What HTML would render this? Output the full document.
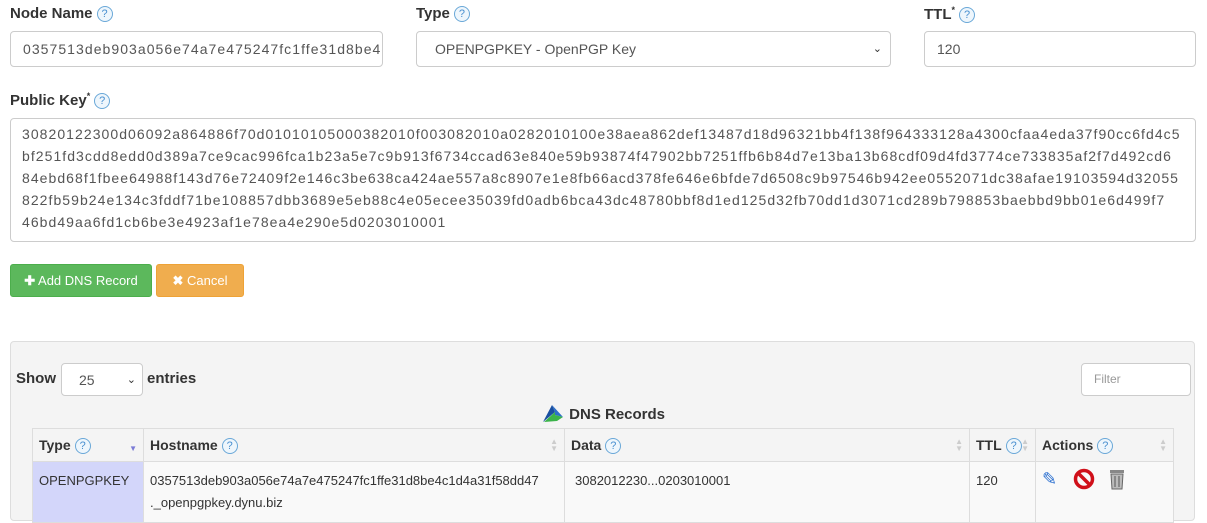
<!DOCTYPE html>
<html><head><meta charset="utf-8"><style>
body{margin:0;width:1207px;height:514px;overflow:hidden;background:#fff;font-family:"Liberation Sans",sans-serif;color:#333;position:relative}
.a{position:absolute}
.lbl{font-weight:bold;font-size:15px;color:#333}
.q{display:inline-block;width:14px;height:14px;border:1px solid #6aa8d8;border-radius:50%;color:#4a90d0;font-size:11px;line-height:14px;text-align:center;font-weight:normal;background:#eef6fc;vertical-align:1px;margin-left:4px}
.inp{border:1px solid #ccc;border-radius:4px;box-sizing:border-box;background:#fff;font-size:14px;color:#555;padding-left:12px;white-space:nowrap;overflow:hidden}
.ta div{white-space:nowrap;letter-spacing:1.05px;height:22px}
.btn{color:#fff;font-size:13px;border-radius:3px;box-sizing:border-box;text-align:center;line-height:32px}
th,td{border:1px solid #ddd;text-align:left;vertical-align:top}
th{font-size:14px;font-weight:bold;height:32px;padding:0 6px;vertical-align:middle;background:#f4f4f4;position:relative}
td{font-size:13px;padding:8px 6px 0;line-height:22px;background:#f9f9f9}
.s{position:absolute;right:6px;top:9px;color:#ccc;font-size:8px;line-height:7px}
</style></head><body>
<div class="a lbl" style="left:10px;top:5px">Node Name<span class="q">?</span></div>
<div class="a inp" style="left:10px;top:31px;width:373px;height:36px;line-height:34px;letter-spacing:1.05px">0357513deb903a056e74a7e475247fc1ffe31d8be4c1d4a31f58dd47</div>
<div class="a lbl" style="left:416px;top:5px">Type<span class="q">?</span></div>
<div class="a inp" style="left:416px;top:31px;width:475px;height:36px;line-height:34px;padding-left:18px">OPENPGPKEY - OpenPGP Key<span style="position:absolute;right:8px;top:0;font-size:11px;color:#333">&#8964;</span></div>
<div class="a lbl" style="left:924px;top:5px">TTL<sup style="font-size:9px">*</sup><span class="q">?</span></div>
<div class="a inp" style="left:924px;top:31px;width:272px;height:36px;line-height:34px">120</div>
<div class="a lbl" style="left:10px;top:91px">Public Key<sup style="font-size:9px">*</sup><span class="q">?</span></div>
<div class="a inp ta" style="left:10px;top:118px;width:1186px;height:124px;padding:4px 0 0 11px;line-height:22px">
<div>30820122300d06092a864886f70d01010105000382010f003082010a0282010100e38aea862def13487d18d96321bb4f138f964333128a4300cfaa4eda37f90cc6fd4c5</div>
<div>bf251fd3cdd8edd0d389a7ce9cac996fca1b23a5e7c9b913f6734ccad63e840e59b93874f47902bb7251ffb6b84d7e13ba13b68cdf09d4fd3774ce733835af2f7d492cd6</div>
<div>84ebd68f1fbee64988f143d76e72409f2e146c3be638ca424ae557a8c8907e1e8fb66acd378fe646e6bfde7d6508c9b97546b942ee0552071dc38afae19103594d32055</div>
<div>822fb59b24e134c3fddf71be108857dbb3689e5eb88c4e05ecee35039fd0adb6bca43dc48780bbf8d1ed125d32fb70dd1d3071cd289b798853baebbd9bb01e6d499f7</div>
<div>46bd49aa6fd1cb6be3e4923af1e78ea4e290e5d0203010001</div>
</div>
<div class="a btn" style="left:10px;top:264px;width:142px;height:33px;background:#5cb85c;border:1px solid #4cae4c"><b>&#10010;</b> Add DNS Record</div>
<div class="a btn" style="left:156px;top:264px;width:88px;height:33px;background:#f0ad4e;border:1px solid #eea236"><b>&#10006;</b> Cancel</div>
<div class="a" style="left:10px;top:341px;width:1185px;height:180px;background:#f4f4f4;border:1px solid #ddd;border-radius:4px;box-sizing:border-box"></div>
<div class="a lbl" style="left:16px;top:370px;font-size:15px">Show</div>
<div class="a inp" style="left:61px;top:363px;width:82px;height:33px;line-height:33px;padding-left:17px;font-size:14px">25<span style="position:absolute;right:6px;top:0;font-size:11px;color:#333">&#8964;</span></div>
<div class="a lbl" style="left:147px;top:370px;font-size:15px">entries</div>
<div class="a inp" style="left:1081px;top:363px;width:110px;height:33px;line-height:31px;font-size:12px;color:#999;padding-left:12px">Filter</div>
<div class="a lbl" style="left:541px;top:403px;font-size:15px"><svg width="24" height="20" viewBox="0 0 24 20" style="vertical-align:-4px"><path d="M2 19 L11 2 L14 9 Z" fill="#1a4fa0"/><path d="M11 2 L22 14 L14 12 L14 9Z" fill="#2d6fc8"/><path d="M3 19 L14 9 L14 12 L22 14 L16 18Z" fill="#3bb34a"/></svg> DNS Records</div>
<table class="a" style="left:32px;top:428px;border-collapse:collapse;width:1142px">
<tr><th style="width:98px">Type<span class="q">?</span><span class="s" style="color:#7b7bd6;top:16px">&#9660;</span></th><th style="width:408px">Hostname<span class="q">?</span><span class="s">&#9650;<br>&#9660;</span></th><th style="width:392px">Data<span class="q">?</span><span class="s">&#9650;<br>&#9660;</span></th><th style="width:53px">TTL<span class="q">?</span><span class="s">&#9650;<br>&#9660;</span></th><th>Actions<span class="q">?</span><span class="s">&#9650;<br>&#9660;</span></th></tr>
<tr><td style="background:#d3d6fa;height:52px">OPENPGPKEY</td><td>0357513deb903a056e74a7e475247fc1ffe31d8be4c1d4a31f58dd47<br>._openpgpkey.dynu.biz</td><td style="padding-left:10px">3082012230...0203010001</td><td>120</td><td style="padding-top:6px"><span style="color:#2a6fd0;font-size:18px">&#9998;</span> <svg width="22" height="22" viewBox="0 0 22 22" style="vertical-align:-5px;margin-left:12px"><circle cx="11" cy="11" r="8.5" fill="none" stroke="#d0101a" stroke-width="3.5"/><path d="M5 5 L17 17" stroke="#d0101a" stroke-width="3.5"/></svg> <svg width="18" height="22" viewBox="0 0 18 22" style="vertical-align:-5px;margin-left:10px"><rect x="2" y="2" width="14" height="3" fill="#888"/><path d="M3 6 L15 6 L14 21 L4 21Z" fill="#bbb" stroke="#666"/><path d="M7 8V19M11 8V19" stroke="#555"/></svg></td></tr>
</table>
</body></html>
